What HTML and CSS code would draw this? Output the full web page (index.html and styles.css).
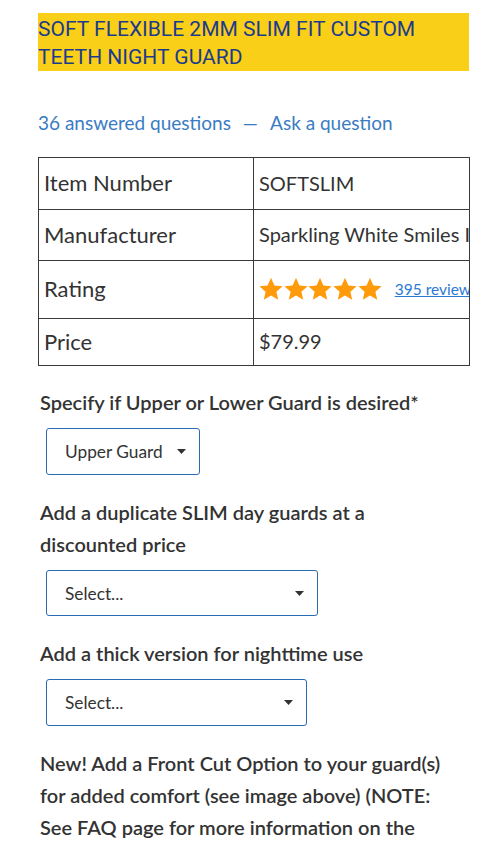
FILE: index.html
```html
<!DOCTYPE html>
<html>
<head>
<meta charset="utf-8">
<link rel="stylesheet" href="styles.css">
</head>
<body>
<div class="page">
  <h1 class="title">SOFT FLEXIBLE 2MM SLIM FIT CUSTOM TEETH NIGHT GUARD</h1>
  <div class="qa">
    <a class="qa-link" href="#">36 answered questions</a>
    <span class="qa-sep">—</span>
    <a class="qa-link" href="#">Ask a question</a>
  </div>
  <div class="table-wrap">
    <table class="specs">
      <colgroup><col class="c1"><col class="c2"></colgroup>
      <tr class="r1"><th>Item Number</th><td>SOFTSLIM</td></tr>
      <tr class="r2"><th>Manufacturer</th><td>Sparkling White Smiles Inc</td></tr>
      <tr class="r3"><th>Rating</th><td><span class="rating"><span class="stars"><svg width="24" height="24" viewBox="0 0 24 24"><path d="M12 .8l3.4 7.6 8.2.8-6.2 5.5 1.8 8.1L12 18.6l-7.2 4.2 1.8-8.1L.4 9.2l8.2-.8z" fill="#ff9a0a"/></svg><svg width="24" height="24" viewBox="0 0 24 24"><path d="M12 .8l3.4 7.6 8.2.8-6.2 5.5 1.8 8.1L12 18.6l-7.2 4.2 1.8-8.1L.4 9.2l8.2-.8z" fill="#ff9a0a"/></svg><svg width="24" height="24" viewBox="0 0 24 24"><path d="M12 .8l3.4 7.6 8.2.8-6.2 5.5 1.8 8.1L12 18.6l-7.2 4.2 1.8-8.1L.4 9.2l8.2-.8z" fill="#ff9a0a"/></svg><svg width="24" height="24" viewBox="0 0 24 24"><path d="M12 .8l3.4 7.6 8.2.8-6.2 5.5 1.8 8.1L12 18.6l-7.2 4.2 1.8-8.1L.4 9.2l8.2-.8z" fill="#ff9a0a"/></svg><svg width="24" height="24" viewBox="0 0 24 24"><path d="M12 .8l3.4 7.6 8.2.8-6.2 5.5 1.8 8.1L12 18.6l-7.2 4.2 1.8-8.1L.4 9.2l8.2-.8z" fill="#ff9a0a"/></svg></span><a class="reviews" href="#">395 reviews</a></span></td></tr>
      <tr class="r4"><th>Price</th><td>$79.99</td></tr>
    </table>
  </div>

  <div class="field">
    <div class="label">Specify if Upper or Lower Guard is desired*</div>
    <div class="select s1"><span>Upper Guard</span><svg width="9" height="5" viewBox="0 0 9 5"><path d="M0 0h9L4.5 5z" fill="#333"/></svg></div>
  </div>
  <div class="field">
    <div class="label">Add a duplicate SLIM day guards at a discounted price</div>
    <div class="select s2"><span>Select...</span><svg width="9" height="5" viewBox="0 0 9 5"><path d="M0 0h9L4.5 5z" fill="#333"/></svg></div>
  </div>
  <div class="field">
    <div class="label">Add a thick version for nighttime use</div>
    <div class="select s3"><span>Select...</span><svg width="9" height="5" viewBox="0 0 9 5"><path d="M0 0h9L4.5 5z" fill="#333"/></svg></div>
  </div>
  <div class="field">
    <div class="label">New! Add a Front Cut Option to your guard(s) for added comfort (see image above) (NOTE: See FAQ page for more information on the Front Cut Option)</div>
  </div>
</div>
</body>
</html>
```

FILE: styles.css
```css
html, body {
  margin: 0;
  padding: 0;
  background: #fff;
}
body {
  font-family: Lato, "Open Sans", sans-serif;
  color: #333;
  overflow: hidden;
  height: 850px;
}
.page {
  padding: 13px 19px 0 38px;
}
.title {
  margin: 0;
  background: #f9cf17;
  color: #1d3b8e;
  font-family: Roboto, "Liberation Sans", sans-serif;
  font-weight: 400;
  font-size: 21px;
  line-height: 28px;
  padding: 2px 40px 0 0;
}
.qa {
  margin-top: 39px;
  font-size: 19px;
  line-height: 26px;
  color: #3a7cc3;
}
.qa-link {
  color: #3a7cc3;
  text-decoration: none;
}
.qa-sep {
  margin: 0 8px 0 7px;
}
.table-wrap {
  margin-top: 21px;
  width: 431px;
}
.specs {
  border-collapse: collapse;
  table-layout: fixed;
  width: 431px;
}
.specs .c1 { width: 215px; }
.specs .c2 { width: 216px; }
.specs th, .specs td {
  border: 1px solid #3a3a3a;
  padding: 0 0 2px 5px;
  text-align: left;
  white-space: nowrap;
  overflow: hidden;
  vertical-align: middle;
  color: #333;
}
.specs th {
  font-weight: 400;
  font-size: 22px;
}
.specs td {
  font-size: 20px;
}
.r1 { height: 52px; }
.r2 { height: 51px; }
.r3 { height: 58px; }
.r4 { height: 47px; }
.rating {
  display: flex;
  align-items: center;
}
.stars {
  display: flex;
  gap: 0.7px;
}
.stars svg { display: block; }
.reviews {
  margin-left: 13px;
  font-size: 15.5px;
  color: #2a7ad3;
  text-decoration: underline;
}
.field {
  margin-top: 20px;
  padding-left: 2px;
}
.label {
  width: 412px;
  font-size: 20px;
  font-weight: 600;
  line-height: 32px;
  color: #333;
}
.select {
  margin: 10px 0 0 6px;
  box-sizing: border-box;
  height: 47px;
  border: 1px solid #2a6cb4;
  border-radius: 3px;
  display: flex;
  align-items: center;
  justify-content: space-between;
  padding: 0 13px 0 18px;
  font-size: 17.3px;
  color: #333;
}
.select svg { display: block; }
.s1 { width: 154px; }
.s2 { width: 272px; height: 46px; }
.s3 { width: 261px; }
.field + .field { margin-top: 21px; }
```
